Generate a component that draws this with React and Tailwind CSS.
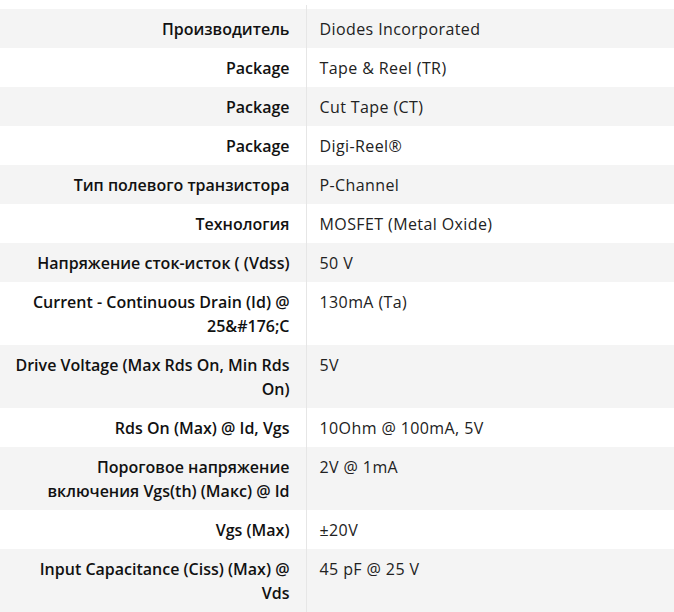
import React from 'react';

const rows = [
  ['Производитель', 'Diodes Incorporated'],
  ['Package', 'Tape & Reel (TR)'],
  ['Package', 'Cut Tape (CT)'],
  ['Package', 'Digi-Reel®'],
  ['Тип полевого транзистора', 'P-Channel'],
  ['Технология', 'MOSFET (Metal Oxide)'],
  ['Напряжение сток-исток ( (Vdss)', '50 V'],
  ['Current - Continuous Drain (Id) @ 25&#176;C', '130mA (Ta)'],
  ['Drive Voltage (Max Rds On, Min Rds On)', '5V'],
  ['Rds On (Max) @ Id, Vgs', '10Ohm @ 100mA, 5V'],
  ['Пороговое напряжение включения Vgs(th) (Макс) @ Id', '2V @ 1mA'],
  ['Vgs (Max)', '±20V'],
  ['Input Capacitance (Ciss) (Max) @ Vds', '45 pF @ 25 V'],
];

export default function App() {
  return (
    <div className="min-h-screen bg-white pt-[5px] text-[16px] leading-[24px] font-['Open_Sans',sans-serif] text-[#111]">
      <table className="w-full border-collapse">
        <tbody>
          <tr className="h-[4px]">
            <td className="w-[306px] border-r border-[#e6e6e6] p-0"></td>
            <td className="p-0"></td>
          </tr>
          {rows.map(([label, value], i) => (
            <tr key={i} className={i % 2 === 0 ? 'bg-[#f4f4f4]' : 'bg-white'}>
              <td className="w-[306px] border-r border-[#e6e6e6] pl-[10px] pr-[16px] py-[7.5px] text-right align-top font-semibold">
                {label}
              </td>
              <td className="pl-[13px] pr-3 py-[7.5px] align-top text-[#222] tracking-[0.4px]">{value}</td>
            </tr>
          ))}
        </tbody>
      </table>
    </div>
  );
}
